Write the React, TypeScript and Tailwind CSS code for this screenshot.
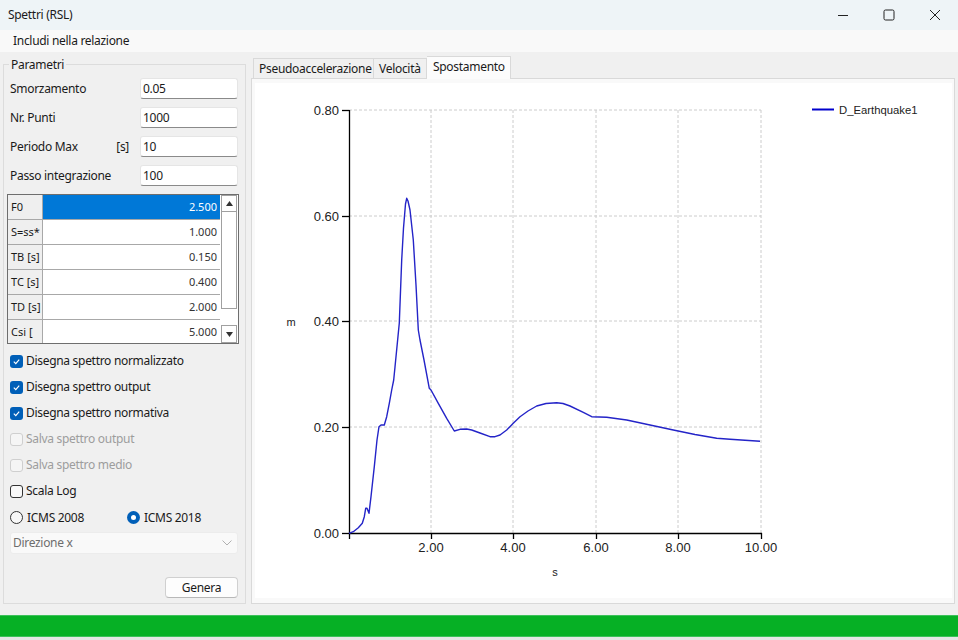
import React from 'react';

const curve =
  '349,533.3 353.3,531.7 358.3,527.7 362.3,523.3 364.3,516.7 365.7,508.3 367,508.3 369,513.3 371,496.7 374.3,466.7 377,440 379,426.7 381,425 384.3,425 386.7,416.7 389.3,403.3 391.7,390 393.7,380 395,367 399.3,323 401.7,260 403.5,228 405.5,204 406.7,198.3 408,201 410,210 413.3,240 416,285 418.3,330 420,340 424,360 429.3,388.3 431,390 438.3,403.3 446.7,418.3 454.3,431 460,429.3 466.7,429 471.7,430 480,433 490,436.7 495,436.7 500,435 506.7,430 513,423.5 520,416.7 528,411 536.7,406 546,403.5 556.7,402.7 563,403.5 570,406 583.3,412.3 591.7,416.7 606.7,417.3 626.7,420 650,425 673.3,430 695,434.5 716.7,438.3 730,439.3 760,441.3';

const xTicks = [
  { x: 431, label: '2.00' },
  { x: 513, label: '4.00' },
  { x: 596, label: '6.00' },
  { x: 678, label: '8.00' },
  { x: 761, label: '10.00' },
];
const yTicks = [
  { y: 110, label: '0.80' },
  { y: 216, label: '0.60' },
  { y: 321, label: '0.40' },
  { y: 427, label: '0.20' },
  { y: 533, label: '0.00' },
];

const gridRows = [
  { name: 'F0', value: '2.500' },
  { name: 'S=ss*', value: '1.000' },
  { name: 'TB [s]', value: '0.150' },
  { name: 'TC [s]', value: '0.400' },
  { name: 'TD [s]', value: '2.000' },
  { name: 'Csi [', value: '5.000' },
];

function Field({ label, value, unit }: { label: string; value: string; unit?: string }) {
  return (
    <div className="flex items-center h-[21px]">
      <div className="w-[130px] flex justify-between pr-[11px]">
        <span>{label}</span>
        {unit && <span>{unit}</span>}
      </div>
      <div className="w-[98px] h-[21px] bg-white border border-[#e5e5e5] border-b-[#8a8a8a] rounded-[3px] flex items-center pl-[2px]">
        {value}
      </div>
    </div>
  );
}

function Check({ label, checked, disabled }: { label: string; checked?: boolean; disabled?: boolean }) {
  return (
    <div className="flex items-center h-[26px] pl-[6px]">
      {checked ? (
        <span className="w-[13px] h-[13px] rounded-[3px] bg-[#005fb8] flex items-center justify-center">
          <svg width="9" height="9" viewBox="0 0 10 10">
            <path d="M2 5.2 L4.2 7.3 L8 2.8" fill="none" stroke="white" strokeWidth="1.3" />
          </svg>
        </span>
      ) : (
        <span
          className={
            'w-[13px] h-[13px] rounded-[3px] border ' +
            (disabled ? 'border-[#cfcfcf] bg-[#f5f5f5]' : 'border-[#333333] bg-[#f8f8f8]')
          }
        />
      )}
      <span className={'ml-[3px] ' + (disabled ? 'text-[#9d9d9d]' : 'text-[#1a1a1a]')}>{label}</span>
    </div>
  );
}

function Chart() {
  return (
    <svg width="697" height="515" viewBox="255 83 697 515" className="block tracking-normal">
      {/* grid */}
      {xTicks.map((t) => (
        <line key={t.x} x1={t.x} y1={110} x2={t.x} y2={533} stroke="#cccccc" strokeDasharray="3 2" />
      ))}
      {yTicks.slice(0, 4).map((t) => (
        <line key={t.y} x1={349} y1={t.y} x2={761} y2={t.y} stroke="#cccccc" strokeDasharray="3 2" />
      ))}
      {/* axes */}
      <line x1={349.5} y1={110} x2={349.5} y2={534} stroke="#000" strokeWidth="1.3" />
      <line x1={349} y1={533.5} x2={762} y2={533.5} stroke="#000" strokeWidth="1.3" />
      {yTicks.map((t) => (
        <g key={t.label}>
          <line x1={342} y1={t.y + 0.5} x2={349} y2={t.y + 0.5} stroke="#000" strokeWidth="1.3" />
          <text x={339} y={t.y + 4.5} textAnchor="end" fontSize="13" fill="#222" fontFamily="'Liberation Sans', Arial, sans-serif">
            {t.label}
          </text>
        </g>
      ))}
      <line x1={349.5} y1={533} x2={349.5} y2={539} stroke="#000" strokeWidth="1.3" />
      {xTicks.map((t) => (
        <g key={t.label}>
          <line x1={t.x + 0.5} y1={533} x2={t.x + 0.5} y2={539} stroke="#000" strokeWidth="1.3" />
          <text x={t.x} y={552} textAnchor="middle" fontSize="13" fill="#222" fontFamily="'Liberation Sans', Arial, sans-serif">
            {t.label}
          </text>
        </g>
      ))}
      <text x={555} y={576} textAnchor="middle" fontSize="11" fill="#222" fontFamily="'Liberation Sans', Arial, sans-serif">
        s
      </text>
      <text x={291} y={326} textAnchor="middle" fontSize="11" fill="#222" fontFamily="'Liberation Sans', Arial, sans-serif">
        m
      </text>
      {/* curve */}
      <polyline points={curve} fill="none" stroke="#2424c8" strokeWidth="1.4" strokeLinejoin="round" />
      {/* legend */}
      <line x1={812} y1={109.5} x2={834} y2={109.5} stroke="#0000cc" strokeWidth="2" />
      <text x={839} y={113.5} fontSize="11.3" fill="#222" fontFamily="'Liberation Sans', Arial, sans-serif">
        D_Earthquake1
      </text>
    </svg>
  );
}

export default function App() {
  return (
    <div className="w-[958px] h-[640px] flex flex-col bg-[#f0f0f0] text-[12px] tracking-[-0.3px] text-[#1a1a1a] font-['Segoe_UI','Noto_Sans',sans-serif] overflow-hidden">
      {/* title bar */}
      <div className="h-[30px] flex items-center justify-between bg-[#eef4f7] pl-[8px]">
        <span>Spettri (RSL)</span>
        <div className="flex items-center h-full">
          <div className="w-[46px] h-full flex items-center justify-center">
            <svg width="12" height="12" viewBox="0 0 12 12">
              <path d="M1 6.5 H11" stroke="#222" strokeWidth="1" />
            </svg>
          </div>
          <div className="w-[46px] h-full flex items-center justify-center">
            <svg width="12" height="12" viewBox="0 0 12 12">
              <rect x="1" y="1" width="10" height="10" rx="1.5" fill="none" stroke="#222" strokeWidth="1" />
            </svg>
          </div>
          <div className="w-[46px] h-full flex items-center justify-center">
            <svg width="12" height="12" viewBox="0 0 12 12">
              <path d="M1 1 L11 11 M11 1 L1 11" stroke="#222" strokeWidth="1" />
            </svg>
          </div>
        </div>
      </div>

      {/* menu */}
      <div className="h-[22px] bg-[#f9f9f9] flex items-center pl-[13px]">Includi nella relazione</div>

      {/* main */}
      <div className="h-[563px] flex px-[3px]">
        {/* Parametri */}
        <div className="relative mt-[12px] w-[243px] h-[540px] border border-[#dcdcdc] flex flex-col">
          <span className="absolute -top-[9px] left-[5px] px-[2px] bg-[#f0f0f0]">Parametri</span>
          <div className="pl-[6px] pt-[13px] flex flex-col gap-[8px]">
            <Field label="Smorzamento" value="0.05" />
            <Field label="Nr. Punti" value="1000" />
            <Field label="Periodo Max" value="10" unit="[s]" />
            <Field label="Passo integrazione" value="100" />
          </div>

          {/* grid */}
          <div className="ml-[3px] mt-[8px] w-[232px] h-[150px] border border-[#6e6e6e] flex bg-white text-[11px] tracking-normal overflow-hidden">
            <div className="flex-1 flex flex-col">
              {gridRows.map((r, i) => (
                <div key={r.name} className="flex h-[25px] shrink-0 border-b border-[#a8a8a8]">
                  <div className="w-[35px] bg-[#efefef] border-r border-[#a8a8a8] flex items-center pl-[3px]">{r.name}</div>
                  <div
                    className={
                      'flex-1 flex items-center justify-end pr-[3px] ' +
                      (i === 0 ? 'bg-[#0078d7] text-white' : 'text-[#333]')
                    }
                  >
                    {r.value}
                  </div>
                </div>
              ))}
            </div>
            <div className="w-[18px] bg-white flex flex-col px-[1px]">
              <div className="h-[17px] border border-[#a0a0a0] flex items-center justify-center">
                <svg width="7" height="5" viewBox="0 0 7 5">
                  <path d="M0 5 L3.5 0 L7 5 Z" fill="#333" />
                </svg>
              </div>
              <div className="h-[97px] border-x border-b border-[#a0a0a0]" />
              <div className="flex-1" />
              <div className="h-[18px] border border-[#a0a0a0] flex items-center justify-center">
                <svg width="7" height="5" viewBox="0 0 7 5">
                  <path d="M0 0 L3.5 5 L7 0 Z" fill="#333" />
                </svg>
              </div>
            </div>
          </div>

          {/* options */}
          <div className="mt-[4px] flex flex-col">
            <Check label="Disegna spettro normalizzato" checked />
            <Check label="Disegna spettro output" checked />
            <Check label="Disegna spettro normativa" checked />
            <Check label="Salva spettro output" disabled />
            <Check label="Salva spettro medio" disabled />
            <Check label="Scala Log" />
            <div className="flex items-center h-[27px] pl-[6px]">
              <div className="w-[117px] flex items-center">
                <span className="w-[13px] h-[13px] rounded-full border border-[#333] bg-[#f8f8f8]" />
                <span className="ml-[4px]">ICMS 2008</span>
              </div>
              <span className="w-[13px] h-[13px] rounded-full bg-[#005fb8] flex items-center justify-center">
                <span className="w-[5px] h-[5px] rounded-full bg-white" />
              </span>
              <span className="ml-[4px]">ICMS 2018</span>
            </div>
          </div>

          <div className="ml-[6px] mt-[1px] w-[228px] h-[22px] bg-[#f9f9f9] border border-[#ececec] rounded-[3px] flex items-center justify-between pl-[2px] pr-[5px] text-[#6d6d6d]">
            <span>Direzione x</span>
            <svg width="10" height="6" viewBox="0 0 10 6">
              <path d="M0.5 0.5 L5 5 L9.5 0.5" fill="none" stroke="#b0b0b0" strokeWidth="1" />
            </svg>
          </div>

          <div className="mt-auto mb-[5px] self-end mr-[7px] w-[73px] h-[21px] bg-[#fdfdfd] border border-[#d0d0d0] border-b-[#b8b8b8] rounded-[4px] flex items-center justify-center">
            Genera
          </div>
        </div>

        {/* tabs */}
        <div className="ml-[5px] mt-[4px] w-[704px] flex flex-col">
          <div className="h-[22px] flex items-end pl-[2px]">
            <div className="w-[121px] h-[20px] border border-b-0 border-[#d9d9d9] bg-[#f0f0f0] flex items-center pl-[5px]">
              Pseudoaccelerazione
            </div>
            <div className="w-[53px] h-[20px] border border-l-0 border-b-0 border-[#d9d9d9] bg-[#f0f0f0] flex items-center pl-[5px]">
              Velocità
            </div>
            <div className="w-[84px] h-[23px] -mb-[1px] border border-l-0 border-b-0 border-[#d9d9d9] bg-[#fcfcfc] flex items-center pl-[6px] pb-[3px] relative">
              Spostamento
            </div>
          </div>
          <div className="h-[526px] border border-[#d9d9d9] bg-[#f9f9f9] pl-[3px] pt-[4px]">
            <div className="w-[697px] h-[515px] bg-white">
              <Chart />
            </div>
          </div>
        </div>
      </div>

      {/* progress */}
      <div className="h-[22px] bg-[#06b025] border-y border-[#3cc05a]" />
      <div className="flex-1 bg-[#e6e6e6]" />
    </div>
  );
}
